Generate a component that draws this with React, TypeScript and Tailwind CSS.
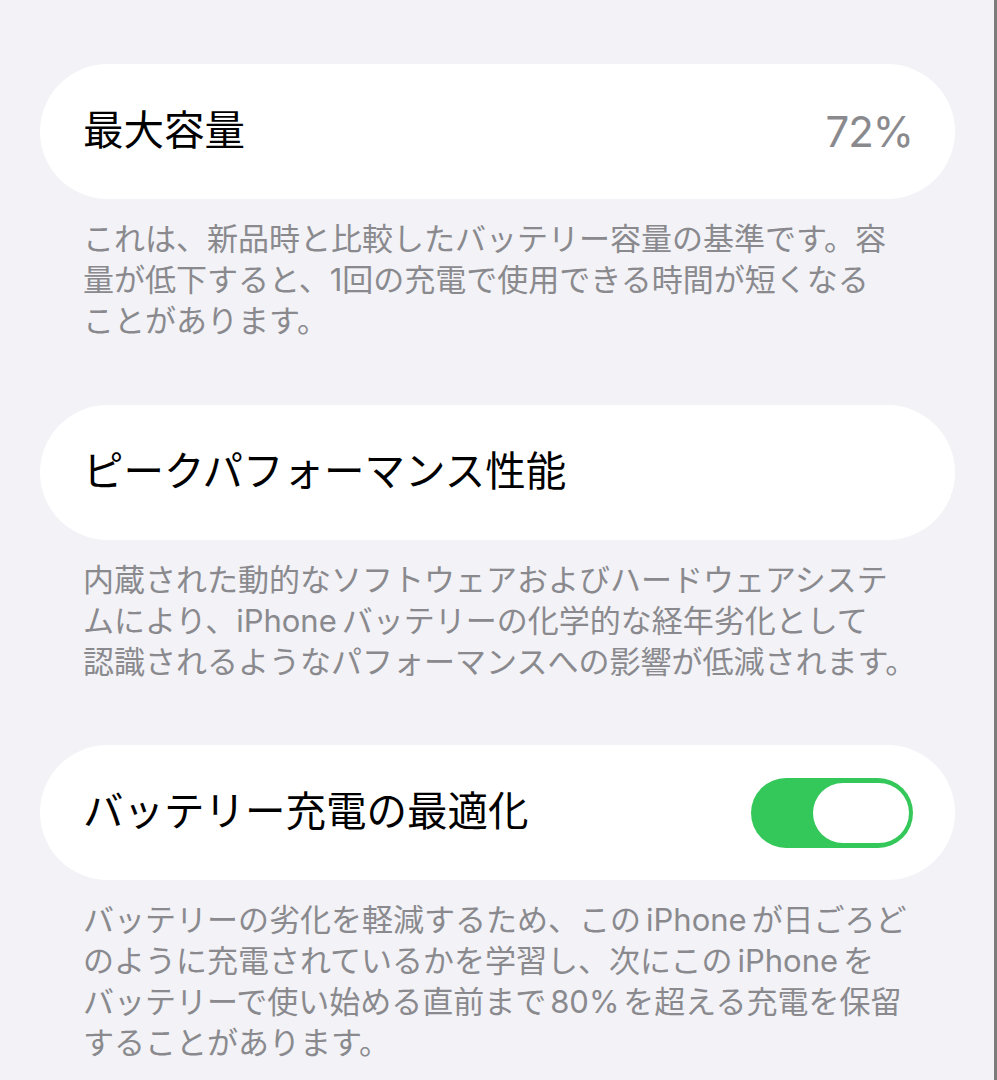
const jp = "font-['Inter','Noto_Sans_CJK_JP',sans-serif]";

const Row = ({ children }: { children: React.ReactNode }) => (
  <div className="h-[135px] w-[915px] rounded-full bg-white pl-[43px] pr-[42px] flex items-center justify-between">
    {children}
  </div>
);

const Desc = ({ lines }: { lines: React.ReactNode[] }) => (
  <div className="mt-[19px] pl-[43px] text-[31px] leading-[41px] text-[#8a8a8e]">
    {lines.map((l, i) => (
      <div key={i} className="whitespace-nowrap">
        {l}
      </div>
    ))}
  </div>
);

const IP = ({ left = true }: { left?: boolean }) => (
  <span className={left ? "mx-[5px]" : "mr-[5px]"}>iPhone</span>
);

export default function App() {
  return (
    <div className={`${jp} h-[1080px] overflow-hidden bg-[#f2f2f7] border-r-[3px] border-[#7c7c7c] pt-[64px] pl-[40px]`}>
      <Row>
        <span className="text-[40.5px] text-black">最大容量</span>
        <span className="text-[42px] text-[#8a8a8e] font-['Inter',sans-serif] tracking-tight">72%</span>
      </Row>
      <Desc
        lines={[
          "これは、新品時と比較したバッテリー容量の基準です。容",
          "量が低下すると、1回の充電で使用できる時間が短くなる",
          "ことがあります。",
        ]}
      />

      <div className="mt-[64px]">
        <Row>
          <span className="text-[40.5px] text-black">ピークパフォーマンス性能</span>
        </Row>
      </div>
      <Desc
        lines={[
          "内蔵された動的なソフトウェアおよびハードウェアシステ",
          <>ムにより、<IP left={false} />バッテリーの化学的な経年劣化として</>,
          "認識されるようなパフォーマンスへの影響が低減されます。",
        ]}
      />

      <div className="mt-[63px]">
        <Row>
          <span className="text-[40.5px] text-black">バッテリー充電の最適化</span>
          <div className="relative h-[70px] w-[162px] rounded-full bg-[#34c759]">
            <div className="absolute right-[4px] top-[5px] h-[60px] w-[96px] rounded-full bg-white" />
          </div>
        </Row>
      </div>
      <Desc
        lines={[
          <>バッテリーの劣化を軽減するため、この<IP />が日ごろど</>,
          <>のように充電されているかを学習し、次にこの<IP />を</>,
          <>バッテリーで使い始める直前まで<span className="mx-[4px]">80%</span>を超える充電を保留</>,
          "することがあります。",
        ]}
      />
    </div>
  );
}
